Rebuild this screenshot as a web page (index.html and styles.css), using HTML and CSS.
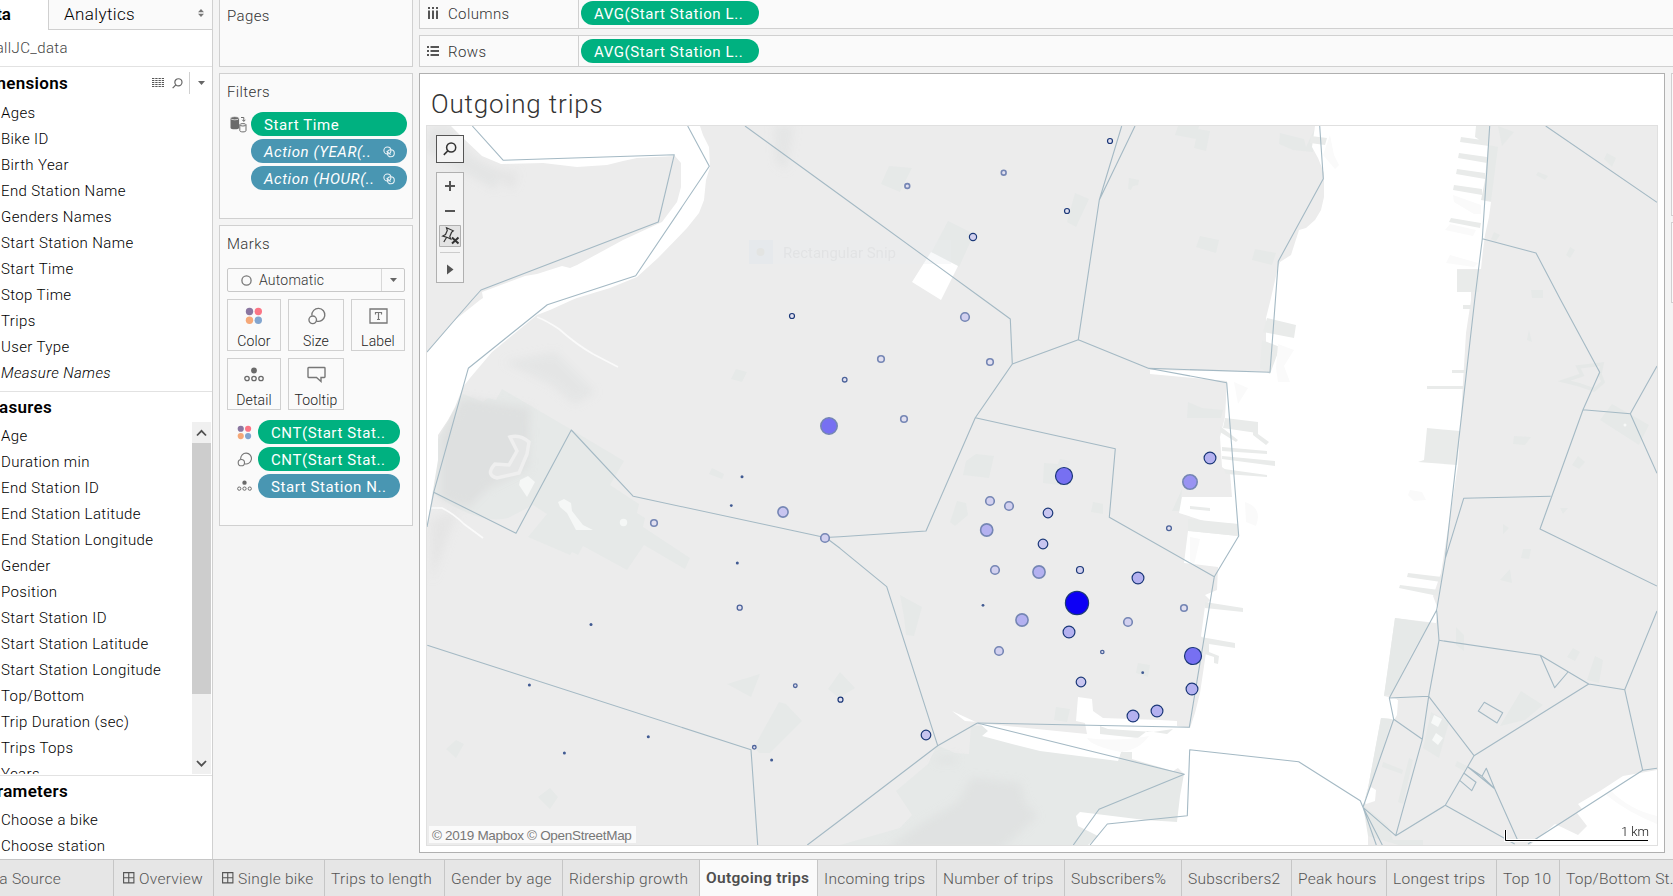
FILE: index.html
```
<!DOCTYPE html>
<html lang="en">
<head>
<meta charset="utf-8">
<title>Outgoing trips</title>
<link rel="stylesheet" href="styles.css">
</head>
<body>
<svg class="defs" width="0" height="0" aria-hidden="true">
  <symbol id="i-color" viewBox="0 0 18 18"><circle cx="4.5" cy="4.5" r="3.7" fill="#8a76a0"/><circle cx="13.3" cy="4.5" r="3.7" fill="#fb7585"/><circle cx="4.5" cy="13.3" r="3.7" fill="#f5a878"/><circle cx="13.3" cy="13.3" r="3.7" fill="#82a5cf"/></symbol>
  <symbol id="i-size" viewBox="0 0 20 20"><path d="M4.9 9.3A7.2 7.2 0 1 1 10 15.600" fill="none" stroke="#777" stroke-width="1.5"/><circle cx="5.800" cy="14.200" r="4.200" fill="none" stroke="#777" stroke-width="1.5"/></symbol>
  <symbol id="i-detail" viewBox="0 0 20 15"><circle cx="10" cy="3" r="2.9" fill="#6a6a6a"/><g fill="none" stroke="#6a6a6a" stroke-width="1.3"><circle cx="3" cy="11" r="2.2"/><circle cx="10" cy="11" r="2.2"/><circle cx="17" cy="11" r="2.2"/></g></symbol>
  <symbol id="i-link" viewBox="0 0 12 12"><g fill="none" stroke="#e8f1f5" stroke-width="1.1"><circle cx="4.4" cy="4.5" r="3.5"/><circle cx="7.8" cy="7.3" r="3.5"/><path d="M3.6 5.2l4 3.4"/></g></symbol>
  <symbol id="i-search" viewBox="0 0 12 12"><circle cx="7" cy="4.7" r="3.9" fill="none" stroke="currentColor" stroke-width="1.3"/><path d="M4.2 7.5L.7 11" stroke="currentColor" stroke-width="1.4"/></symbol>
  <symbol id="i-dash" viewBox="0 0 12 12"><path d="M.6.6h10.3v10.3H.6zM5.75.6v10.3M.6 5.75h10.3" fill="none" stroke="#555" stroke-width="1.1"/></symbol>
</svg>

<div class="workspace">
  <aside class="data-pane">
    <div class="pane-tabs">
      <div class="pane-tab active">Data</div>
      <div class="pane-tab"><span>Analytics</span>
        <svg width="6" height="8" viewBox="0 0 6 8"><path d="M0 3.3L3 0l3 3.3zM0 4.7L3 8l3-3.3z" fill="#777"/></svg>
      </div>
    </div>
    <div class="source"><span class="cut">allJC_data</span></div>
    <div class="section-head dims"><span class="cut">Dimensions</span>
      <svg class="grid-icon" width="12" height="10" viewBox="0 0 12 10"><path d="M0 .5h12M0 2.5h12M0 4.500h12M0 6.500h12M0 8.500h12" stroke="#555" stroke-width="1.100" stroke-dasharray="2.350 .900"/></svg>
      <svg class="find-icon" width="11" height="11"><use href="#i-search"/></svg>
      <i class="vr"></i>
      <svg class="caret" width="7" height="4" viewBox="0 0 7 4"><path d="M0 0h7L3.5 4z" fill="#666"/></svg>
    </div>
    <ul class="fields">
      <li>Ages</li><li>Bike ID</li><li>Birth Year</li><li>End Station Name</li><li>Genders Names</li><li>Start Station Name</li><li>Start Time</li><li>Stop Time</li><li>Trips</li><li>User Type</li><li class="it">Measure Names</li>
    </ul>
    <div class="section-head meas"><span class="cut">Measures</span></div>
    <div class="measures">
      <ul class="fields">
        <li>Age</li><li>Duration min</li><li>End Station ID</li><li>End Station Latitude</li><li>End Station Longitude</li><li>Gender</li><li>Position</li><li>Start Station ID</li><li>Start Station Latitude</li><li>Start Station Longitude</li><li>Top/Bottom</li><li>Trip Duration (sec)</li><li>Trips Tops</li><li>Years</li>
      </ul>
      <div class="scrollbar">
        <svg width="19" height="21" viewBox="0 0 19 21"><path d="M5 13.5l4.5-4.7 4.5 4.7" fill="none" stroke="#505050" stroke-width="1.8"/></svg>
        <div class="thumb"></div>
        <svg width="19" height="21" viewBox="0 0 19 21"><path d="M5 8l4.5 4.7L14 8" fill="none" stroke="#505050" stroke-width="1.8"/></svg>
      </div>
    </div>
    <div class="section-head params"><span class="cut">Parameters</span></div>
    <ul class="fields"><li>Choose a bike</li><li>Choose station</li></ul>
  </aside>

  <div class="cards">
    <section class="card pages"><h3>Pages</h3></section>
    <section class="card filters"><h3>Filters</h3>
      <div class="filter-row">
        <svg width="17" height="17" viewBox="0 0 17 17"><path d="M.5 2.3v9.4c0 1 1.8 1.6 4.3 1.6s4.3-.6 4.3-1.6V2.3z" fill="#6b6b6b"/><ellipse cx="4.8" cy="2.2" rx="4.3" ry="1.6" fill="#6b6b6b" stroke="#fafafa" stroke-width=".7"/><g fill="#fafafa" stroke="#6b6b6b"><path d="M9.8 8.8v5.8c0 .8 1.2 1.3 3.1 1.3s3.1-.5 3.1-1.3V8.800"/><ellipse cx="12.900" cy="8.800" rx="3.100" ry="1.200"/></g><path d="M11 1.500h2.800v3.500M12.300 3.800l1.500 1.700 1.500-1.700" fill="none" stroke="#6b6b6b"/></svg>
        <div class="pill green">Start Time</div>
      </div>
      <div class="filter-row"><div class="pill blue it">Action (YEAR(..<svg width="12" height="12"><use href="#i-link"/></svg></div></div>
      <div class="filter-row"><div class="pill blue it">Action (HOUR(..<svg width="12" height="12"><use href="#i-link"/></svg></div></div>
    </section>
    <section class="card marks"><h3>Marks</h3>
      <div class="select"><svg width="11" height="11" viewBox="0 0 11 11"><circle cx="5.500" cy="5.500" r="4.600" fill="none" stroke="#777" stroke-width="1.300"/></svg><span>Automatic</span><b><svg width="7" height="4" viewBox="0 0 7 4"><path d="M0 0h7L3.500 4z" fill="#666"/></svg></b></div>
      <div class="buttons">
        <div class="btn"><svg width="18" height="18"><use href="#i-color"/></svg>Color</div>
        <div class="btn"><svg width="19" height="18"><use href="#i-size"/></svg>Size</div>
        <div class="btn"><svg width="19" height="18" viewBox="0 0 19 18"><path d="M1 2h17v14H1z" fill="none" stroke="#777" stroke-width="1.300"/><path d="M6.500 7.500V5.500h6v2M9.500 5.500v7M8 12.500h3" fill="none" stroke="#777" stroke-width="1.200"/></svg>Label</div>
        <div class="btn"><svg width="20" height="18"><use href="#i-detail"/></svg>Detail</div>
        <div class="btn"><svg width="19" height="18" viewBox="0 0 19 18"><path d="M1.700 1.500h15.600q.7 0 .7.700v8.600q0 .7-.7.700H14v4l-4.500-4H1.700q-.7 0-.7-.7V2.200q0-.7.700-.7z" fill="none" stroke="#777" stroke-width="1.400"/></svg>Tooltip</div>
      </div>
      <div class="mark-row"><svg width="15" height="15"><use href="#i-color"/></svg><div class="pill green">CNT(Start Stat..</div></div>
      <div class="mark-row"><svg width="15" height="15"><use href="#i-size"/></svg><div class="pill green">CNT(Start Stat..</div></div>
      <div class="mark-row"><svg width="15" height="12"><use href="#i-detail"/></svg><div class="pill blue">Start Station N..</div></div>
    </section>
  </div>

  <main class="main">
    <div class="shelf columns"><div class="shelf-label"><svg width="12" height="12" viewBox="0 0 12 12"><path d="M2 0v2M6 0v2M10 0v2M2 3.500V12M6 3.500V12M10 3.500V12" stroke="#555" stroke-width="2"/></svg>Columns</div><div class="pill green">AVG(Start Station L..</div></div>
    <div class="shelf rows"><div class="shelf-label"><svg width="12" height="12" viewBox="0 0 12 12"><path d="M0 2h2M0 6h2M0 10h2M3.500 2H12M3.500 6H12M3.500 10H12" stroke="#555" stroke-width="2"/></svg>Rows</div><div class="pill green">AVG(Start Station L..</div></div>
    <div class="lower">
      <section class="viz">
        <h1>Outgoing trips</h1>
        <div class="map">
<svg class="map-svg" width="1230" height="719" viewBox="427 126 1230 719">
<defs><filter id="soft" x="-20%" y="-20%" width="140%" height="140%"><feGaussianBlur stdDeviation="4"/></filter></defs>
<rect x="427" y="126" width="1230" height="719" fill="#ececec"/>
<g fill="#e6e9e8">
<path d="M463 394l20 8 5-4 8 2 6-11 70 41 52 31-14 24 29 19-2 9 8 5-2 9 47 31-5 11-41-24-17 25-44-24-5 9-6-3-2 3-42-18 19-23-14-9-25 13q-30 8-80-28l-13-9z"/>
<path d="M937 745l18 8 14 1 2-28h40l173 48-7 48-30-2-25 25H840l60-17 12-13-16-24 32-27z"/>
<path d="M889 166l23 2-12 24-19-8zM948 221l26 13-15 33-28-14zM1075 193l14 6-13 28-9-5zM1178 126l21 0-3 13-21-4zM1198 129l12 2-4 20-12-3zM1129 178l10 2-1 5-5 1-2 4-3-1zM1200 236l19 4-3 13-20-6zM1255 249l21 4-4 12-20-5z"/>
<path d="M1280 133l24 6 2 8 10-21-3 26-20-2-14-6zM736 369l11 3-5 10-11-3zM712 468l12 6-2 5-13-5zM976 454l18 2-5 22-26-3 3-14zM1044 463l14 1 2-5 10 2-3 25-24-3zM957 501l9 2 2 12-13 11-5-4zM1093 502l10 2v10l-12-2zM1188 402l14 6 21 2-2 8-34 0zM1182 489l-2 22-8 0zM727 684l33-10-9 23zM779 702l7 2 16 17-32 32-11 0-5-6zM456 740l8 4-8 14-10-9zM550 788l8 9-8 12-12-12zM840 672l15 16-16 10-11-9zM900 595l22 12-8 29-8-1-2-18zM1138 663l12 2-2 12-12-4zM1056 707l14 2-3 13-13-2z"/>
<path d="M1488 145l10 2-7 54-10-1zM1498 126l16 6-12 14zM1538 172l10 4-3 4-9-5zM1607 153l9 5-4 9-8-8zM1494 232l6 3-4 6-5-2zM1570 247l5 3-5 8-4-3zM1531 290l12 0v8l-11 0zM1529 330l3 12-5-2z"/>
<path d="M1612 404l37 21-10 20-39-25zM1514 436l17 1-6 8-12-1zM1578 456l7 6-6 7-7-4zM1503 524l6 4-6 6zM1523 549l8 0-2 10-8-1zM1510 569l2 14-12-3zM1560 508l8 0-5 6zM1456 627l8 8 0 16-8-6zM1573 648l7 4-5 9-8-4zM1595 656l8 4-4 23-12-3zM1521 691l22 14-18 15-25 6zM1431 712l18 10-10 36-16-10zM1457 761l10 5-3 5-9-5zM1383 762l20 8-1 4-20-7zM1409 758l4 2-10 44-5-2z"/>
<path d="M1402 846l-34-10-4-30 24 20 5 14 30 0v6z"/>
</g>
<path d="M1564 381l18-6-4-8 24-3-2 10 3 8-9 8-14-5z" fill="none" stroke="#e5e8e7" stroke-width="3.500"/>
<g fill="#dcdddd" filter="url(#soft)">
<path d="M462 398l68 10-2 60-40 20-20 20-28-10 0-60z" opacity=".8"/><path d="M505 362l50-10 40 40-20 12-25-20z" opacity=".45"/><path d="M430 520l28-10-26 70z" opacity=".4"/><path d="M430 128l22 0 18 28 30 16-4 18-70-40z" opacity=".5"/><path d="M494 170l24 2-4 16-6 0z" opacity=".4"/><path d="M774 126h20l-8 44-10-8z" opacity=".45"/><path d="M972 778l48 5 5 20 12 13-37 34H885l38-27 34-20z" opacity=".6"/><path d="M935 757h22v6h-18z" opacity=".5"/>
</g>
<g fill="#fff">
<path d="M451 126l12 12 19 18 19 8 42-1 34 4 30-2 16-4 14-3 38-2 6 7v24l-4 15-15 20-39 18-46 25-7 3-8-2-25 8-12 2-43 16 1 6-3 2-25 20-28 33V527l6-37 5-30v-25l10-15 7-13 8-20 7-9 22-26 45-37 13-5 22-10 5-2 33-10 27-11 21-19 29-30 12-15 5-13 2-20 4-13-1-20-6-12-3-9z"/>
<path d="M1315 126l-3 21 6 11 6 15v24l-3 13-6 10-9 8-7 2-8 25-11 7-2 5-7 31-5 20V372L1150 370v4L1227 381L1225 417L1220 437L1222 467L1230 473L1232 497L1182 497L1179 513L1207 522L1238 524V536L1188 531L1184 563L1218 567L1217 590L1205 595L1210 600L1205 606L1201 636L1207 646L1200 693L1195 713L1190 728L1177 726V721L1160 720L1103 718L1093 711L1092 699L1078 697L1076 721L1085 723L1087 734L1027 728L978 723L952 711L965 721L978 722L988 731L982 736L1012 744L1040 751L1118 761L1122 751L1132 759L1173 771L1178 768L1184 774L1180 796L1177 822L1145 820L1080 812L1076 816L1078 826L1098 836L1088 845H1368V836L1363 806L1368 788L1381 718L1391 719L1397 699L1384 696L1395 618L1436 623L1438 609L1433 596L1441 573L1458 465L1466 333L1471 300V292H1457V269H1481L1483 250L1485 235L1489 217L1491 202L1481 200L1485 180L1488 145L1476 137L1479 126z"/>
<path d="M931 252l27 14-17 34-29-18zM1657 770l-34 6-23 15-22 13 4 5-5 4 10 13-9 9-23-11-25 21h127z"/>
</g>
<path d="M1395 618l35 5-18 30-16 32-4 9-8 2zM1381 718l11 1-10 32-18 52 4-15z" fill="#e6e9e8"/>
<g fill="#f5f7f6"><path d="M558 502l6-3 7 4 1 8 11 14 10 5-17 0-9-17-7-6zM520 480l8-4 7 6-8 15-8-12z"/><circle cx="623.500" cy="522.500" r="3.700"/></g>
<path d="M510 437q10-3 19 5l-2 12-8 19-22 5q-12-3-2-14l14 1 8-14z" fill="#e5e6e6" stroke="#efefef" stroke-width="3.500"/>
<path d="M537 317q10 4 22 12 18 16 34 25l25 13M431 508h11q12 6 22 16l19 14" fill="none" stroke="#fafafa" stroke-width="1.700"/>
<g fill="#e9ebea">
<path d="M1461 137l28 4v5l-29-4zM1459 153l28 4v6l-29-5zM1457 169l28 4v6l-29-5zM1454 185l28 4v6l-29-5zM1451 218l30 5-1 5-31-6zM1476 126h13v20l-14-9zM1311 136l16 2-2 7-15-2z"/>
<path d="M1267 318l29 7-2 13-31-6zM1262 340l18 7-10 27-10-6zM1463 305h8v4h-8zM1452 370h14v3h-14zM1427 386h37v3h-37zM1427 428l33 3-3 34-39-3 6-2zM1408 573l34 4-1 5-34-5zM1400 585l39 5-1 6-39-8zM1457 270h22v22h-22z"/>
<path d="M1225 418l33 4-1 11-34-5zM1222 447l45 4v3l-45-3zM1222 456l53 5v5l-53-7zM1220 426l18 14-2 2-16-10zM1224 469l43 6v2l-41-3zM1253 422h5v12l11 8-3 3-13-10zM1190 506l20 2v3l-20-2zM1188 519l50 5v12l-50-5zM1205 602l38 6v4l-38-4zM1201 637l34 6v5l-26-4v8l10 4-1 8-4-1v-6l-9-3z"/>
<path d="M1100 726l8 3 45 3 20-3-6 5-20-3-9 7-38-4zM1121 752l11 0v10l-13-2z"/>
</g>
<g fill="#fff"><path d="M1371 787l5 3-1 11-9 3-2-3zM1391 699l7 1-1 15-3 5-5-2z"/></g>
<g fill="#f7f9f8"><path d="M1434 715l8 4-4 8-7-4zM1436 733l7 5-5 7-6-5z"/><circle cx="1625" cy="425" r="1.500"/></g>
<g fill="#fafafa"><path d="M1087 738q30 4 62-2-10 14-28 16-30-6-34-14zM1330 135l4 20 5 10-4 4-12-14zM1453 195l28 10v9l-7 0-20-12zM1450 224l26 6-3 6-28-6zM1450 255l28 8-4 4-28-4zM1278 344l16 6-10 16 6 16-12 0-2-14zM1245 502q18 6 11 24l-10-4zM1190 537l10 2-6 26-4-4zM1234 382l14 6-10 16zM1410 490l12 2 4 8-12 1-6-6zM1610 790q20 20 47 26v8q-30-12-52-30z"/></g>
<g opacity=".55"><rect x="749" y="240" width="202" height="24" fill="#e9edf0" opacity=".6"/><rect x="749" y="240" width="24" height="24" fill="#e2e8ed"/><circle cx="760.500" cy="252" r="4" fill="#dcdedb"/><text x="783" y="258" class="ghost">Rectangular Snip</text></g>
<g class="bounds">
<path d="M472.300 126L503.300 160.300 674.300 154.700 658.300 222 481 290 472 300 427 352"/>
<path d="M687.700 126L709.300 166.300 635.700 275.700 561.700 300 547.300 304.700 468.300 368.300 433.700 492.300 427 527"/>
<path d="M433.700 492.300L516 533.300 571.300 430 633.300 496.300 825 537.500 840 536.700 926 531 975.300 417.700 1012.300 364 1010.300 319 984.300 300 840 195 745 126"/>
<path d="M825 537L840 548.300 886.700 586.700 937.700 745.700 977.300 723M937.700 745.700L840 820.300 807.300 845"/>
<path d="M977.300 723L1189.300 727.300 1214.300 576.700 1109.300 517.300 1115.300 448.700 975.300 417.700M1214.300 576.700L1238.700 536 1226.700 382.700 1148.300 368.300 1078.300 339.700 1012.300 364M1078.300 339.700L1099.300 200 1121.700 126M1099.300 200L1135 126"/>
<path d="M1148.300 368.300L1270 372.300 1278.300 261.300 1323.300 178.700 1319.700 126"/>
<path d="M977.300 723L1184.300 774.300 1099 809.300 1073.300 845M1090 845L1107.300 824 1187.300 815.700 1189.700 749.700 1298.700 761.700 1360.300 800.700 1363 807.300 1376.300 845M1363 807.300L1382.300 845M1363 807.300L1395.700 835.700 1422.300 739.300 1428.700 696.300 1439 640.300 1436.700 610 1389.300 698 1393.700 719.300 1363 807.300M1389.300 698L1428.700 696.300 1474 755.700 1445.300 805.300 1395.700 835.700M1393.700 719.300L1422.300 739.300M1445.300 805.300L1514.700 844"/>
<path d="M1439 640.300L1540.300 655.300 1588.700 684 1474 755.700M1540.300 655.300L1554.700 687.700 1568 672M1588.700 684L1624.700 689.700 1657 611M1624.700 689.700L1642.700 770.300 1657 768.300M1642.700 770.300L1528 844"/>
<path d="M1468 767L1494.700 788.700 1518 841M1468 767L1482 776.300 1486.300 768.300 1494.700 788.700 1482 776.300M1463.700 773L1476 782.300 1471.700 790.700 1459.700 780.300M1484.300 702.300L1502.700 712.700 1497 723 1478.300 711z"/>
<path d="M1489.700 126L1482.300 238.700 1474.700 300 1445.300 558.300 1436.700 610M1482.300 238.700L1536 253 1560.700 300 1599.700 372.300 1583 409.700 1540 529 1657 586M1583 409.700L1630.300 413.700 1657 366M1630.300 413.700L1657 473.300M1550.700 496.300L1463.700 498.300 1445.300 558.300M1545.700 126L1657 202.300M427.300 645.300L751 749.700 757.700 845"/>
</g>
<g class="soft">
<circle class="f1" cx="907.300" cy="186" r="2.400"/><circle class="f1" cx="1003.700" cy="172.700" r="2.400"/><circle class="f6" cx="829" cy="426" r="8.200"/><circle class="f3" cx="783" cy="512" r="5.100"/><circle class="f1" cx="654" cy="523" r="3.300"/><circle class="f2" cx="825" cy="538" r="4.300"/><circle class="f2" cx="965" cy="317" r="4.300"/><circle class="f1" cx="881" cy="359" r="3.300"/><circle class="f1" cx="990" cy="362" r="3.300"/><circle class="f1" cx="904" cy="419" r="3.300"/><circle class="f2" cx="990" cy="501" r="4.300"/><circle class="f2" cx="1009" cy="506" r="4.300"/><circle class="f4" cx="986.700" cy="530" r="6.100"/><circle class="f2" cx="995" cy="570" r="4.300"/><circle class="f4" cx="1039" cy="572" r="6.100"/><circle class="f5" cx="1190" cy="482" r="7.200"/><circle class="f4" cx="1022" cy="620" r="6.100"/><circle class="f2" cx="999" cy="651" r="4.300"/><circle class="f2" cx="1128" cy="622" r="4.300"/><circle class="f1" cx="1184" cy="608" r="3.300"/>
</g>
<g class="mid">
<circle class="f1" cx="739.700" cy="607.700" r="2.500"/><circle class="f1" cx="795.300" cy="685.700" r="1.800"/><circle class="f1" cx="754.300" cy="747.300" r="1.800"/><circle class="f1" cx="844.700" cy="379.700" r="2.300"/><circle class="f1" cx="1169" cy="528.300" r="2.400"/><circle class="f1" cx="1102.300" cy="652" r="1.700"/>
</g>
<g class="crisp">
<circle class="f1" cx="1110" cy="141" r="2.500"/><circle class="f1" cx="1067" cy="211" r="2.500"/><circle class="f2" cx="973" cy="237" r="3.600"/><circle class="f1" cx="792" cy="316" r="2.500"/><circle class="f1" cx="840.500" cy="699.700" r="2.500"/><circle class="f6" cx="1064" cy="476" r="8.500"/><circle class="f3" cx="1048" cy="513" r="4.800"/><circle class="f3" cx="1043" cy="544" r="4.800"/><circle class="f2" cx="1080" cy="570" r="3.500"/><circle class="f4" cx="1138" cy="578" r="5.900"/><circle class="f4" cx="1210" cy="458" r="5.900"/><circle class="f7" cx="1077" cy="603" r="11.600"/><circle class="f4" cx="1069" cy="632" r="5.900"/><circle class="f6" cx="1193" cy="656" r="8.500"/><circle class="f3" cx="1081" cy="682" r="4.800"/><circle class="f4" cx="1192" cy="689" r="5.900"/><circle class="f4" cx="1157" cy="711" r="5.900"/><circle class="f4" cx="1133" cy="716" r="5.900"/><circle class="f3" cx="926" cy="735" r="4.800"/>
</g>
<g class="dots">
<circle cx="742" cy="476.700" r="1.500"/><circle cx="731.300" cy="505.600" r="1.400"/><circle cx="737.300" cy="563" r="1.500"/><circle cx="591" cy="624.600" r="1.500"/><circle cx="529.400" cy="685" r="1.500"/><circle cx="648.300" cy="736.700" r="1.500"/><circle cx="564.400" cy="753" r="1.500"/><circle cx="771.600" cy="760" r="1.500"/><circle cx="983" cy="605.300" r="1.400"/><circle cx="1142.700" cy="672.700" r="1.400"/>
</g>
<path d="M1505.500 830v10.500H1648" fill="none" stroke="#fff" stroke-width="3"/>
<path d="M1505.500 830v10.500H1648" fill="none" stroke="#000" stroke-width="1"/>
<text x="1621" y="835.500" class="scale">1 km</text>
</svg>
          <div class="map-tools">
            <div class="tool-search"><svg width="14" height="14"><use href="#i-search"/></svg></div>
            <div class="tool-stack">
              <svg width="26" height="109" viewBox="0 0 26 109"><path d="M13 8v10M8 13h10M8 38h10" stroke="#555" stroke-width="2"/><path d="M2.500 52.500h21v21h-21z" fill="#e3e3e3" stroke="#b0b0b0"/><path d="M9.500 54.800l6.800 3-1.800 1.600-1.700 4.200 1 2.500-3.300-1.600-4.800-1.500 2.800-1.500 1.800-4zM9.500 64.500L6.800 69" fill="none" stroke="#333" stroke-width="1.200"/><path d="M15 64.500l6.500 6M21.500 64.500l-6.500 6" stroke="#333" stroke-width="2"/><path d="M3 79.500h20" stroke="#ccc"/><path d="M10 91.500v10l6.500-5z" fill="#555"/></svg>
            </div>
          </div>
          <div class="credit">© 2019 Mapbox © OpenStreetMap</div>
        </div>
      </section>
      <div class="side"><div class="side-card one"></div><div class="side-card two"></div></div>
    </div>
  </main>
</div>

<nav class="sheets">
  <div class="sheet w113 source-tab"><span class="cut61">Data Source</span></div>
  <div class="sheet w100 dash"><svg width="12" height="12"><use href="#i-dash"/></svg>Overview</div>
  <div class="sheet w111 dash"><svg width="12" height="12"><use href="#i-dash"/></svg>Single bike</div>
  <div class="sheet w120">Trips to length</div>
  <div class="sheet w118">Gender by age</div>
  <div class="sheet w137">Ridership growth</div>
  <div class="sheet w118 active">Outgoing trips</div>
  <div class="sheet w119">Incoming trips</div>
  <div class="sheet w128">Number of trips</div>
  <div class="sheet w117">Subscribers%</div>
  <div class="sheet w110">Subscribers2</div>
  <div class="sheet w95">Peak hours</div>
  <div class="sheet w110">Longest trips</div>
  <div class="sheet w63">Top 10</div>
  <div class="sheet w120">Top/Bottom St..</div>
</nav>
</body>
</html>
```

FILE: styles.css
```
* { box-sizing: border-box; }
body { margin: 0; width: 1673px; height: 896px; overflow: hidden; background: #f4f4f4; color: #000; font: 360 15px Roboto, "Liberation Sans", sans-serif; letter-spacing: .38px; display: flex; flex-direction: column; }
ul { list-style: none; margin: 0; padding: 0; }
svg { display: block; flex: none; }
.defs { position: absolute; }
.it { font-style: italic; }
.workspace { height: 859px; display: flex; flex: none; }

.data-pane { width: 213px; flex: none; background: #fff; border-right: 1px solid #d0d0d0; overflow: hidden; }
.pane-tabs { display: flex; height: 30px; }
.pane-tab { height: 30px; font-size: 17px; display: flex; align-items: center; padding-bottom: 3px; }
.pane-tab.active { width: 48px; font-weight: 650; font-size: 17px; justify-content: flex-end; padding-right: 37px; letter-spacing: 0; white-space: nowrap; }
.pane-tab:last-child { flex: 1; background: #fafafa; border-left: 1px solid #d0d0d0; border-bottom: 1px solid #d0d0d0; padding-left: 15px; padding-right: 8px; justify-content: space-between; padding-bottom: 1px; }
.pane-tab svg { margin-top: -3px; }
.cut { width: 68px; display: flex; justify-content: flex-end; white-space: nowrap; }
.source { height: 37px; border-bottom: 1px solid #e2e2e2; padding-top: 9px; color: #444; line-height: 18px; }
.section-head { display: flex; align-items: center; font-weight: 650; font-size: 17px; letter-spacing: .3px; color: #000; padding-bottom: 1px; }
.dims { height: 33px; }
.grid-icon { margin-left: 84px; }
.find-icon { margin-left: 8px; color: #666; }
.vr { width: 1px; height: 22px; background: #d0d0d0; margin-left: 6px; }
.caret { margin-left: 8px; }
.fields li { height: 26px; line-height: 26px; padding-left: 1px; white-space: nowrap; }
.meas { height: 32px; margin-top: 5px; border-top: 1px solid #e2e2e2; padding-bottom: 2px; }
.meas .cut { width: 52px; }
.measures { overflow: hidden; display: flex; justify-content: space-between; margin-top: -1px; height: 352px; }
.measures .fields { padding-top: 1px; }
.scrollbar { width: 19px; height: 352px; margin-right: 1px; background: #f0f0f0; display: flex; flex-direction: column; }
.thumb { height: 251px; background: #cdcdcd; margin-bottom: 59px; }
.params { height: 32px; margin-top: 1px; border-top: 1px solid #e2e2e2; padding-bottom: 2px; }

.cards { width: 194px; margin-left: 6px; flex: none; display: flex; flex-direction: column; gap: 6px; }
.card { background: #fafafa; border: 1px solid #d0d0d0; }
.card h3 { margin: 0; font-weight: inherit; font-size: 15px; color: #333; line-height: 18px; padding: 9px 0 0 7px; }
.pages { height: 67px; border-top: 0; }
.pages h3 { padding-top: 7px; }
.filters { height: 146px; }
.filter-row { display: flex; justify-content: flex-end; padding-right: 5px; margin-bottom: 3px; }
.filter-row:first-of-type { margin-top: 11px; }
.filter-row > svg { margin: 4px 4px 0 0; }
.pill { height: 24px; border-radius: 12px; color: #fff; font-weight: 450; font-size: 15px; line-height: 26px; padding-left: 13px; white-space: nowrap; letter-spacing: .58px; }
.green { background: #00b180; }
.blue { background: #4996b2; }
.filter-row .pill { width: 156px; display: flex; justify-content: space-between; align-items: center; padding: 1px 12px 0 13px; }
.marks { height: 301px; }
.marks h3 { padding-top: 9px; }
.select { width: 178px; height: 24px; margin: 15px 0 0 7px; border: 1px solid #c8c8c8; border-radius: 2px; display: flex; align-items: center; padding-left: 13px; gap: 7px; font-size: 14px; color: #333; letter-spacing: .2px; }
.select b { margin-left: auto; width: 23px; height: 22px; border-left: 1px solid #d8d8d8; display: grid; place-items: center; }
.buttons { margin: 7px 0 0 7px; display: grid; grid-template-columns: 54px 56px 54px; grid-auto-rows: 52px; gap: 7px; }
.btn { border: 1px solid #d0d0d0; display: flex; flex-direction: column; align-items: center; padding-top: 7px; gap: 7px; font-size: 14px; line-height: 18px; color: #222; letter-spacing: .15px; }
.mark-row { display: flex; align-items: center; gap: 6px; padding-left: 17px; margin-bottom: 3px; }
.buttons + .mark-row { margin-top: 10px; }
.mark-row .pill { width: 142px; }

.main { flex: 1; margin-left: 6px; min-width: 0; }
.shelf { background: #fafafa; border: 1px solid #d0d0d0; border-right: 0; display: flex; align-items: center; }
.columns { height: 29px; border-top: 0; padding-bottom: 3px; align-items: flex-end; }
.rows { height: 32px; margin-top: 6px; }
.shelf-label { width: 159px; height: 30px; border-right: 1px solid #d0d0d0; display: flex; align-items: center; gap: 9px; padding: 2px 0 0 7px; color: #333; }
.shelf-label svg { margin-top: -2px; }
.columns .shelf-label { height: 28px; margin-bottom: -3px; padding-top: 0; padding-bottom: 1px; }
.shelf .pill { width: 178px; margin-left: 2px; }
.lower { display: flex; margin-top: 6px; gap: 6px; }
.viz { width: 1246px; height: 780px; flex: none; background: #fff; border: 1px solid #b0b0b0; padding-left: 6px; }
.viz h1 { margin: 0; height: 51px; padding: 13px 0 0 5px; font-weight: 280; font-size: 26px; line-height: 34px; letter-spacing: .85px; color: #333; }
.map { width: 1232px; height: 721px; border: 1px solid #e0e0e0; position: relative; overflow: hidden; }
.bounds { fill: none; stroke: #a4b9c4; stroke-width: 1.1; stroke-linejoin: round; }
.soft { stroke: #7586b4; stroke-width: 1.6; }
.mid { stroke: #4c639a; stroke-width: 1.3; }
.crisp { stroke: #1b3878; stroke-width: 1.2; }
.dots { fill: #405a92; }
.f1 { fill: #e2e0f0; } .f2 { fill: #d2d0ef; } .f3 { fill: #c8c5f0; } .f4 { fill: #b4b1f0; } .f5 { fill: #9993f2; } .f6 { fill: #7770f2; } .f7 { fill: #0d00f5; }
.ghost { font: 15px Roboto, sans-serif; fill: #dadcde; letter-spacing: 0; }
.scale { font: 360 13px Roboto, sans-serif; fill: #111; letter-spacing: -.1px; }
.map-tools { position: absolute; left: 9px; top: 9px; }
.tool-search { width: 28px; height: 28px; border: 1px solid #555; background: #f4f4f4; display: grid; place-items: center; color: #333; }
.tool-stack { width: 28px; height: 111px; margin-top: 9px; border: 1px solid #b0b0b0; background: #f4f4f4; }
.credit { position: absolute; left: 2px; bottom: 2px; width: 207px; height: 17px; background: #fafafa; color: #777; font: 13.500px/19px "Liberation Sans", sans-serif; letter-spacing: -.3px; padding-left: 3px; white-space: nowrap; }
.side { flex: 1; display: flex; flex-direction: column; gap: 6px; overflow: hidden; }
.side-card { width: 20px; background: #fafafa; border: 1px solid #d0d0d0; }
.one { height: 143px; } .two { height: 81px; }

.sheets { height: 37px; flex: none; display: flex; background: #e6e6e6; border-top: 1px solid #c6c6c6; color: #555; overflow: hidden; }
.sheet { flex: none; border-right: 1px solid #c6c6c6; padding: 0 0 0 6px; line-height: 38px; font-size: 15.500px; letter-spacing: .27px; white-space: nowrap; overflow: hidden; display: flex; }
.sheet.active { background: #fafafa; font-weight: 650; color: #4e4e4e; line-height: 36px; letter-spacing: .3px; }
.source-tab { padding: 0; }
.cut61 { width: 61px; display: flex; justify-content: flex-end; }
.dash { padding-left: 9px; gap: 4px; }
.dash.w111 { padding-left: 8px; }
.dash svg { margin-top: 12px; }
.w63 { width: 63px; } .w95 { width: 95px; } .w100 { width: 100px; } .w110 { width: 110px; } .w111 { width: 111px; } .w113 { width: 114px; } .w117 { width: 117px; } .w118 { width: 118px; } .w119 { width: 119px; } .w120 { width: 120px; } .w128 { width: 128px; } .w137 { width: 137px; }
```
